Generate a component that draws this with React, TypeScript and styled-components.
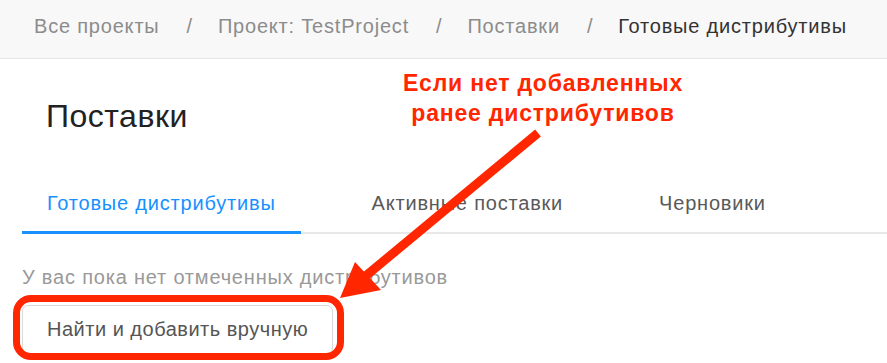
import React from 'react';
import styled, { createGlobalStyle } from 'styled-components';

/**
 * Styles
 */

const GlobalStyle = createGlobalStyle`
  html, body {
    margin: 0;
    padding: 0;
    background: #fff;
  }
  body {
    font-family: 'Liberation Sans', Arial, sans-serif;
  }
`;

const Page = styled.div`
  position: relative;
  width: 887px;
  height: 363px;
  overflow: hidden;
  background: #fff;
`;

const BreadcrumbBar = styled.nav`
  display: flex;
  align-items: center;
  height: 59px;
  padding: 0 0 6px 34px;
  box-sizing: border-box;
  background: #f8f8f8;
  border-bottom: 1px solid #e6e6e6;
  font-size: 20px;
  line-height: 30px;
  letter-spacing: 0.8px;
  white-space: nowrap;
`;

const Crumb = styled.span<{ $current?: boolean }>`
  color: ${({ $current }) => ($current ? '#333' : '#8c8c8c')};
`;

const Separator = styled.span`
  color: #8c8c8c;
  padding: 0 25px 0 27px;
`;

const Main = styled.main`
  padding-left: 22px;
`;

const Title = styled.h1`
  margin: 37px 0 0 24px;
  font-size: 32px;
  line-height: 40px;
  font-weight: 400;
  letter-spacing: 0.5px;
  color: #222;
`;

const TabBar = styled.div`
  display: flex;
  gap: 46px;
  margin-top: 35px;
  border-bottom: 2px solid #e8e8e8;
`;

const Tab = styled.div<{ $active?: boolean }>`
  padding: 17px 25px 13px;
  margin-bottom: -2px;
  font-size: 20px;
  line-height: 30px;
  letter-spacing: 0.8px;
  white-space: nowrap;
  color: ${({ $active }) => ($active ? '#1890ff' : '#595959')};
  border-bottom: 3px solid ${({ $active }) => ($active ? '#1890ff' : 'transparent')};
`;

const EmptyText = styled.p`
  margin: 28px 0 0;
  font-size: 20px;
  line-height: 30px;
  letter-spacing: 0.8px;
  color: #999;
`;

const Button = styled.button`
  margin-top: 13px;
  height: 49px;
  padding: 0 24px;
  font-family: inherit;
  font-size: 20px;
  letter-spacing: 0.5px;
  color: #555;
  background: #fff;
  border: 1px solid #d9d9d9;
  border-radius: 6px;
  box-shadow: 0 1px 2px rgba(0, 0, 0, 0.04);
`;

const Note = styled.div`
  position: absolute;
  left: 393px;
  top: 68px;
  width: 300px;
  text-align: center;
  font-size: 23px;
  line-height: 30px;
  font-weight: 700;
  letter-spacing: 0.8px;
  color: #ff2600;
`;

const Highlight = styled.div`
  position: absolute;
  left: 13px;
  top: 295px;
  width: 331px;
  height: 65px;
  box-sizing: border-box;
  border: 7px solid #ff2600;
  border-radius: 18px;
`;

const ArrowLayer = styled.svg`
  position: absolute;
  left: 0;
  top: 0;
  pointer-events: none;
`;

/**
 * Data
 */

const crumbs = ['Все проекты', 'Проект: TestProject', 'Поставки', 'Готовые дистрибутивы'];
const tabs = ['Готовые дистрибутивы', 'Активные поставки', 'Черновики'];

/**
 * Component
 */

export default function App(): JSX.Element {
  return (
    <Page>
      <GlobalStyle />
      <BreadcrumbBar>
        {crumbs.map((c, i) => (
          <React.Fragment key={c}>
            {i > 0 && <Separator>/</Separator>}
            <Crumb $current={i === crumbs.length - 1}>{c}</Crumb>
          </React.Fragment>
        ))}
      </BreadcrumbBar>

      <Main>
        <Title>Поставки</Title>
        <TabBar>
          {tabs.map((t, i) => (
            <Tab key={t} $active={i === 0}>
              {t}
            </Tab>
          ))}
        </TabBar>
        <EmptyText>У вас пока нет отмеченных дистрибутивов</EmptyText>
        <Button>Найти и добавить вручную</Button>
      </Main>

      <Highlight />
      <Note>
        Если нет добавленных
        <br />
        ранее дистрибутивов
      </Note>
      <ArrowLayer width="887" height="363" viewBox="0 0 887 363">
        <line x1="538" y1="133" x2="362" y2="279" stroke="#ff2600" strokeWidth="9" />
        <polygon points="340,298 355,262 381,290" fill="#ff2600" />
      </ArrowLayer>
    </Page>
  );
}
